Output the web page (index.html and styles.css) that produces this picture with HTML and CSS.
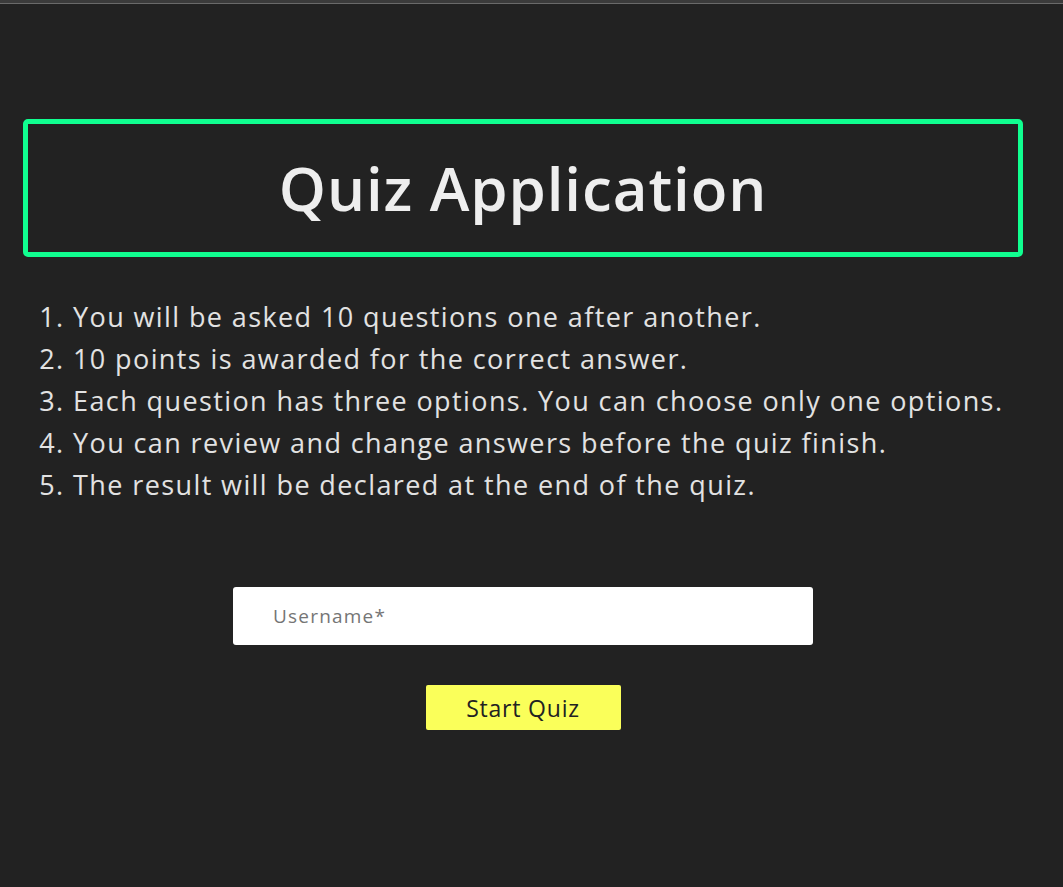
FILE: index.html
```html
<!DOCTYPE html>
<html lang="en">
<head>
<meta charset="utf-8">
<title>Quiz Application</title>
<link rel="stylesheet" href="styles.css">
</head>
<body>
<div class="topbar"></div>
<main class="page">
  <header class="title-box">
    <h1 class="title">Quiz Application</h1>
  </header>
  <ol class="rules">
    <li>You will be asked 10 questions one after another.</li>
    <li>10 points is awarded for the correct answer.</li>
    <li>Each question has three options. You can choose only one options.</li>
    <li>You can review and change answers before the quiz finish.</li>
    <li>The result will be declared at the end of the quiz.</li>
  </ol>
  <form class="start-form">
    <input class="username" type="text" placeholder="Username*">
    <button class="start-btn" type="button">Start Quiz</button>
  </form>
</main>
</body>
</html>
```
FILE: styles.css
```css
html, body {
  margin: 0;
  padding: 0;
  background: #222222;
  height: 100%;
}
body {
  font-family: "Open Sans", "Noto Sans", sans-serif;
  color: #e6e6e6;
}
.topbar {
  height: 3px;
  background: #3b3b3b;
  border-bottom: 1px solid #6a6a6a;
}
.page {
  width: 1000px;
  margin-left: 23px;
  padding-top: 115px;
}
.title-box {
  border: 5px solid #10ff90;
  border-radius: 5px;
  height: 128px;
  display: flex;
  align-items: center;
  justify-content: center;
}
.title {
  margin: 0;
  font-size: 60px;
  font-weight: 600;
  color: #eeeeee;
  letter-spacing: 0.9px;
}
.rules {
  margin: 39px 0 0 0;
  padding-left: 50px;
  font-size: 27px;
  line-height: 42px;
  letter-spacing: 1.4px;
  color: #e2e2e2;
}
.start-form {
  display: flex;
  flex-direction: column;
  align-items: center;
  margin-top: 81px;
  gap: 40px;
}
.username {
  box-sizing: border-box;
  width: 580px;
  height: 58px;
  border: none;
  border-radius: 3px;
  background: #ffffff;
  padding: 0 40px;
  font-family: inherit;
  font-size: 19px;
  letter-spacing: 1.2px;
  color: #333;
  outline: none;
}
.username::placeholder {
  color: #757575;
}
.start-btn {
  width: 195px;
  height: 45px;
  border: none;
  border-radius: 2px;
  background: #faff5a;
  font-family: inherit;
  font-size: 23px;
  letter-spacing: 0.8px;
  color: #222222;
  cursor: pointer;
}
```
